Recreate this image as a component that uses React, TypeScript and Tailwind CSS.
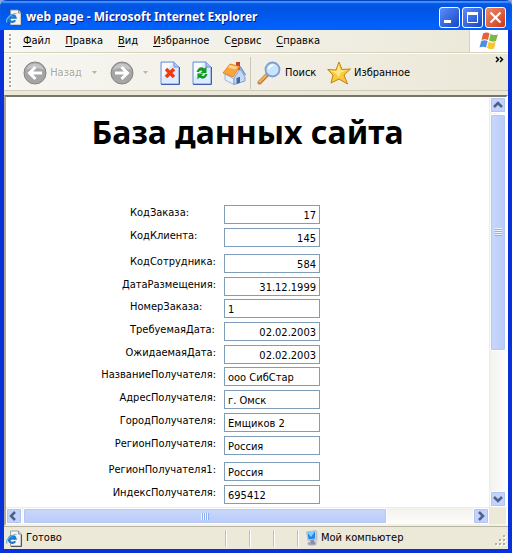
import React from "react";

type Field = { id: string; label: string; value: string; numeric?: boolean; row: string };

const fields: Field[] = [
  { id: "order", label: "КодЗаказа:", value: "17", numeric: true, row: "h-[23px]" },
  { id: "client", label: "КодКлиента:", value: "145", numeric: true, row: "h-[26px]" },
  { id: "employee", label: "КодСотрудника:", value: "584", numeric: true, row: "h-[23px]" },
  { id: "placed", label: "ДатаРазмещения:", value: "31.12.1999", numeric: true, row: "h-[22px]" },
  { id: "number", label: "НомерЗаказа:", value: "1", row: "h-[23px]" },
  { id: "required", label: "ТребуемаяДата:", value: "02.02.2003", numeric: true, row: "h-[23px]" },
  { id: "expected", label: "ОжидаемаяДата:", value: "02.02.2003", numeric: true, row: "h-[22px]" },
  { id: "name", label: "НазваниеПолучателя:", value: "ооо СибСтар", row: "h-[23px]" },
  { id: "address", label: "АдресПолучателя:", value: "г. Омск", row: "h-[23px]" },
  { id: "city", label: "ГородПолучателя:", value: "Емщиков 2", row: "h-[23px]" },
  { id: "region", label: "РегионПолучателя:", value: "Россия", row: "h-[26px]" },
  { id: "region1", label: "РегионПолучателя1:", value: "Россия", row: "h-[23px]" },
  { id: "index", label: "ИндексПолучателя:", value: "695412", row: "h-[23px]" },
];

const menu = [
  ["Ф", "айл", ""],
  ["П", "равка", ""],
  ["В", "ид", ""],
  ["И", "збранное", ""],
  ["е", "рвис", "С"],
  ["С", "правка", ""],
];

function PageIcon() {
  return (
    <svg width="16" height="17" viewBox="0 0 16 17" className="shrink-0">
      <path d="M4.500 1h8l2.500 3v12H4.500z" fill="#f4f3ee" stroke="#8d8f98" strokeWidth="0.800" />
      <path d="M12.500 1v3H15" fill="#cfd8ea" stroke="#777d8c" strokeWidth="0.800" />
      <path d="M15.500 4.500v12H5" fill="none" stroke="#4b5266" />
      <path d="M9.200 11.200A3.400 3.400 0 1 1 9.600 8.700H4" fill="none" stroke="#1c78d0" strokeWidth="2.200" />
      <path d="M1.200 13.500C-1.500 11 4.500 4.500 10.500 4.500" fill="none" stroke="#62b4f0" strokeWidth="1.200" />
    </svg>
  );
}

function Grip({ tall }: { tall?: boolean }) {
  return (
    <svg width="3" height={tall ? 31 : 15} className="shrink-0">
      {Array.from({ length: tall ? 8 : 4 }, (_, i) => (
        <g key={i}>
          <rect x="1" y={i * 4 + 1} width="2" height="2" fill="#fff" />
          <rect x="0" y={i * 4} width="2" height="2" fill="#a9a79b" />
        </g>
      ))}
    </svg>
  );
}

function RoundArrow({ forward }: { forward?: boolean }) {
  return (
    <svg width="24" height="24" viewBox="0 0 24 24" className="shrink-0">
      <circle cx="12" cy="12" r="11" fill="#a5a5a5" stroke="#858585" />
      <path d="M3 9a9.500 9.500 0 0 1 18 0q-9-4-18 0z" fill="#c5c5c5" />
      <path
        d={forward ? "M5 12h12M11.500 6l6 6-6 6" : "M19 12H7M12.500 6l-6 6 6 6"}
        fill="none"
        stroke="#fff"
        strokeWidth="3"
      />
    </svg>
  );
}

function DropMark() {
  return (
    <svg width="5" height="3" className="shrink-0">
      <path d="M0 0h5L2.500 3z" fill="#b7b5a8" />
    </svg>
  );
}

function Sheet({ children }: { children: React.ReactNode }) {
  return (
    <svg width="20" height="24" viewBox="0 0 20 24" className="shrink-0">
      <path d="M1 1h13l5 5v17H1z" fill="#dcebff" stroke="#6a8fd8" />
      <path d="M2 2h10L2 17z" fill="#f7fbff" />
      <path d="M14 1v5h5" fill="#a9c8f8" stroke="#6a8fd8" />
      <path d="M19.500 6v17.500H1" fill="none" stroke="#3e5fae" />
      {children}
    </svg>
  );
}

function HomeIcon() {
  return (
    <svg width="24" height="24" viewBox="0 0 24 24" className="shrink-0">
      <path d="M14 1h4v8h-4z" fill="#c8401c" />
      <path d="M3 13l9 5v5.500L3 19z" fill="#e6effc" stroke="#8ba6d3" strokeWidth="0.800" />
      <path d="M12 17l6-9 5 8v4l-11 3.500z" fill="#c4d9f8" stroke="#6f8dc4" strokeWidth="0.800" />
      <path d="M14.500 17l3.500-1.200v6l-3.500 1.200z" fill="#4c659d" />
      <path d="M1 12L8 3l10 2.500L11 16z" fill="#f9a53c" stroke="#d87a1b" strokeWidth="0.800" />
      <path d="M8 4l8 2-3 2.500-7-2z" fill="#ffd28a" />
      <path d="M18 5.500L23.500 14" stroke="#7893c6" strokeWidth="1.500" />
    </svg>
  );
}

function SearchIcon() {
  return (
    <svg width="24" height="24" viewBox="0 0 24 24" className="shrink-0">
      <path d="M2.500 21.500L10 14" stroke="#b5783f" strokeWidth="4" strokeLinecap="round" />
      <path d="M2.500 21L9 14.500" stroke="#f9ab58" strokeWidth="2.400" strokeLinecap="round" />
      <circle cx="15.500" cy="8.500" r="7" fill="#c5e6fd" stroke="#7f9fd2" strokeWidth="1.800" />
      <path d="M11 9a5 5 0 0 1 7-5q-4 1-7 5z" fill="#fff" />
    </svg>
  );
}

function StarIcon() {
  return (
    <svg width="24" height="24" viewBox="0 0 24 24" className="shrink-0">
      <path
        d="M12 1l3 7.500 8.500-.5-6.500 6 3.500 9L12 18l-8 4 2-8L.700 8.500 9 9z"
        fill="#fbc93a"
        stroke="#bd8217"
        strokeLinejoin="round"
      />
      <path d="M12 3l1.500 6.500 6-.500-6 3-1.500 4-4-4-5-2.500 6.500.500z" fill="#ffe98c" />
    </svg>
  );
}

function WindowsFlag() {
  return (
    <svg width="20" height="18" viewBox="0 0 20 18">
      <path d="M4 1.500q4-2 6.500 0L9 8Q6 6.500 2.500 8z" fill="#e8603a" />
      <path d="M11.500 2q4 2 7.500.200L17 9q-3.500 1.500-7-.500z" fill="#7bbb42" />
      <path d="M2.200 9q3.500-1.500 6.500 0L7 15.500Q4 14 .5 15.500z" fill="#4f8fe0" />
      <path d="M9.700 9.800q3.500 1.800 7 .200L15 16.500q-3.500 1.500-7-.500z" fill="#f8c52c" />
    </svg>
  );
}

function ComputerIcon() {
  return (
    <svg width="16" height="16" viewBox="0 0 16 16" className="shrink-0">
      <ellipse cx="7" cy="13.500" rx="4.500" ry="2" fill="#a9a6c0" />
      <path d="M5 9h4l1 5H6z" fill="#8d8cae" />
      <path d="M10.500 1l2 1v9l-2 3z" fill="#c3c6dc" />
      <path d="M1.500 2L11 .5v8.500L3 10.500z" fill="#dfe8f6" stroke="#8d9fc6" strokeWidth="0.600" />
      <path d="M2.500 2.800L10 1.500v7L3.500 9.500z" fill="#1f86e6" />
      <path d="M2.500 2.800L10 1.500 6 7z" fill="#7fd4ff" />
    </svg>
  );
}

const chevrons = {
  up: "M3 8l4-4 4 4",
  down: "M3 4l4 4 4-4",
  left: "M8 2L4 6l4 4",
  right: "M5 2l4 4-4 4",
};

function ScrollButton({ dir, label }: { dir: keyof typeof chevrons; label: string }) {
  return (
    <button
      type="button"
      aria-label={label}
      className="flex size-4 shrink-0 items-center justify-center rounded-[2px] border border-white bg-[#c3d3fd] outline outline-[#b0c4f0] -outline-offset-2"
    >
      <svg width="14" height="12" viewBox="0 0 14 12" className="shrink-0">
        <path d={chevrons[dir]} fill="none" stroke="#4d6185" strokeWidth="2.500" />
      </svg>
    </button>
  );
}

const captionButton =
  "flex size-[21px] items-center justify-center rounded-[3px] border border-white bg-linear-to-br";

export default function App() {
  return (
    <div className="h-screen bg-[#8ca5dc] font-['DejaVu_Sans_Condensed','DejaVu_Sans',sans-serif] text-[11px] leading-[14px] text-black">
      <div className="flex h-full flex-col overflow-hidden rounded-t-[7px] bg-[#0831d9]">
        <header className="flex h-[30px] shrink-0 items-center bg-linear-to-b from-[#0a5ae8] from-0% via-[#0054e3] via-30% to-[#0061fc] to-90% px-[6px] pt-1 shadow-[inset_0_1px_0_#0842c0,inset_0_3px_1px_#3a93ff]">
          <PageIcon />
          <h1 className="ml-1 flex-1 font-['Noto_Sans',sans-serif] text-[12px] leading-[18px] font-bold whitespace-nowrap text-white [text-shadow:1px_1px_0_#0a1883]">
            web page - Microsoft Internet Explorer
          </h1>
          <div className="flex gap-[2px]">
            <button type="button" aria-label="Свернуть" className={`${captionButton} from-[#5c8dfa] to-[#1645c4]`}>
              <svg width="19" height="19"><rect x="4" y="12" width="7" height="3" fill="#fff" /></svg>
            </button>
            <button type="button" aria-label="Развернуть" className={`${captionButton} from-[#5c8dfa] to-[#1645c4]`}>
              <svg width="19" height="19">
                <path d="M4.500 5v9.500h10V5" fill="none" stroke="#fff" />
                <rect x="4" y="4" width="11" height="3" fill="#fff" />
              </svg>
            </button>
            <button type="button" aria-label="Закрыть" className={`${captionButton} from-[#f08a6c] to-[#cc3410]`}>
              <svg width="19" height="19"><path d="M4.500 4.500l10 10M14.500 4.500l-10 10" stroke="#fff" strokeWidth="2.200" /></svg>
            </button>
          </div>
        </header>

        <div className="mx-1 mb-1 flex min-h-0 flex-1 flex-col bg-[#ece9d8]">
          <nav className="flex h-[23px] shrink-0 items-stretch border-b border-[#d8d2bd] bg-linear-to-r from-[#f8f8f5] to-[#ebe8d8]">
            <div className="flex flex-1 items-center pl-[5px]">
              <Grip />
              <div className="ml-[11px] flex gap-[15px]">
                {menu.map(([key, rest, before]) => (
                  <button type="button" key={before + key + rest}>
                    {before}
                    <span className="underline underline-offset-2">{key}</span>
                    {rest}
                  </button>
                ))}
              </div>
            </div>
            <div className="flex w-[39px] items-center justify-center border-l border-[#d8d2bd] bg-white">
              <WindowsFlag />
            </div>
          </nav>

          <div className="flex h-[38px] shrink-0 items-center border-t border-b border-t-white border-b-[#d0ccba] bg-linear-to-r from-[#f7f6f2] to-[#ebe8d8] pt-px pl-[5px]">
            <Grip tall />
            <button type="button" disabled className="ml-[11px] flex items-center gap-[3px] text-[#aca899]">
              <RoundArrow />
              <span className="w-8 [text-shadow:1px_1px_0_#fff]">Назад</span>
            </button>
            <span className="ml-[10px]"><DropMark /></span>
            <button type="button" disabled aria-label="Вперед" className="ml-[13px]"><RoundArrow forward /></button>
            <span className="ml-[9px]"><DropMark /></span>
            <button type="button" aria-label="Остановить" className="ml-3">
              <Sheet><path d="M6 8l8 8M14 8l-8 8" stroke="#f03a0a" strokeWidth="3.500" /></Sheet>
            </button>
            <button type="button" aria-label="Обновить" className="ml-3">
              <Sheet>
                <path d="M4.500 11q2.500-7 8-3.500l2-2v6.500h-6l2-2q-3-1.500-3.500 1z" fill="#139c1c" />
                <path d="M15.500 13q-2.500 7-8 3.500l-2 2V12.500h6l-2 2q3 1.500 3.500-1.500z" fill="#139c1c" />
              </Sheet>
            </button>
            <button type="button" aria-label="Домой" className="ml-[10px]"><HomeIcon /></button>
            <div className="ml-1 h-8 w-px bg-[#cbc7b6]" />
            <button type="button" className="ml-[6px] flex items-center gap-1">
              <SearchIcon />
              <span className="w-[30px] whitespace-nowrap">Поиск</span>
            </button>
            <button type="button" className="ml-3 flex items-center gap-[3px]">
              <StarIcon />
              Избранное
            </button>
            <button type="button" aria-label="Другие кнопки" className="mr-1 ml-auto self-start pt-px">
              <svg width="9" height="7"><path d="M1 1l2.500 2.500L1 6M5 1l2.500 2.500L5 6" fill="none" stroke="#000" strokeWidth="1.500" /></svg>
            </button>
          </div>

          <div className="mt-1 flex min-h-0 flex-1 flex-col border-2 border-[#aca899] border-r-white border-b-[#f4f2e8] border-t-[#77756b]">
            <div className="flex min-h-0 flex-1">
              <main className="min-w-0 flex-1 overflow-hidden bg-white">
                <h2 className="mt-[15px] text-center font-['Noto_Sans',sans-serif] text-[32px] leading-[40px] font-bold whitespace-nowrap">
                  База данных сайта
                </h2>
                <form className="mt-[53px] ml-[84px]">
                  {fields.map((f) => (
                    <div key={f.id} className={`flex items-start gap-2 ${f.row}`}>
                      <div className="flex w-[126px] justify-end pt-px">
                        <label htmlFor={f.id} className="min-w-[86px] whitespace-nowrap">{f.label}</label>
                      </div>
                      <input
                        id={f.id}
                        defaultValue={f.value}
                        className={`h-[19px] w-24 border border-[#7f9db9] bg-white px-[3px] pt-px ${f.numeric ? "text-right" : "text-left"}`}
                      />
                    </div>
                  ))}
                </form>
              </main>
              <div className="flex w-[17px] flex-col items-center border-l border-[#eeede5] bg-linear-to-r from-[#f3f1ec] to-[#fefefb]">
                <ScrollButton dir="up" label="Прокрутить вверх" />
                <div className="flex min-h-0 w-full flex-1 flex-col py-px">
                  <div className="flex h-[63%] items-center justify-center rounded-[2px] border border-white bg-linear-to-r from-[#c9d8fc] to-[#b9cbf8] shadow-[inset_0_0_0_1px_#b5c8f4]">
                    <div className="h-2 w-[7px] bg-[repeating-linear-gradient(to_bottom,#eef4fe_0_1px,#8cb0f8_1px_2px)]" />
                  </div>
                </div>
                <ScrollButton dir="down" label="Прокрутить вниз" />
              </div>
            </div>
            <div className="flex h-[17px] shrink-0 border-t border-[#eeede5]">
              <div className="flex min-w-0 flex-1 bg-linear-to-b from-[#f3f1ec] to-[#fefefb]">
                <ScrollButton dir="left" label="Прокрутить влево" />
                <div className="flex min-w-0 flex-1 px-px">
                  <div className="flex w-[81%] items-center justify-center rounded-[2px] border border-white bg-linear-to-b from-[#c9d8fc] to-[#b9cbf8] shadow-[inset_0_0_0_1px_#b5c8f4]">
                    <div className="h-[7px] w-2 bg-[repeating-linear-gradient(to_right,#eef4fe_0_1px,#8cb0f8_1px_2px)]" />
                  </div>
                </div>
                <ScrollButton dir="right" label="Прокрутить вправо" />
              </div>
              <div className="w-[17px] bg-[#ece9d8]" />
            </div>
          </div>

          <footer className="flex h-[23px] shrink-0 items-center border-t border-[#b8b4a3] pl-[2px]">
            <PageIcon />
            <span className="ml-1 flex-1">Готово</span>
            <div className="h-[17px] w-6 border-l border-[#c5c1b0] shadow-[inset_1px_0_0_#fff]" />
            <div className="h-[17px] w-6 border-l border-[#c5c1b0] shadow-[inset_1px_0_0_#fff]" />
            <div className="h-[17px] w-6 border-l border-[#c5c1b0] shadow-[inset_1px_0_0_#fff]" />
            <div className="flex h-[17px] w-[211px] items-center border-l border-[#c5c1b0] pl-[7px] shadow-[inset_1px_0_0_#fff]">
              <ComputerIcon />
              <span className="flex-1">Мой компьютер</span>
              <svg width="13" height="13" className="mr-px self-end">
                {[[9, 1], [5, 5], [9, 5], [1, 9], [5, 9], [9, 9]].map(([x, y]) => (
                  <g key={`${x}-${y}`}>
                    <rect x={x + 1} y={y + 1} width="2" height="2" fill="#fff" />
                    <rect x={x} y={y} width="2" height="2" fill="#b3af9f" />
                  </g>
                ))}
              </svg>
            </div>
          </footer>
        </div>
      </div>
    </div>
  );
}
